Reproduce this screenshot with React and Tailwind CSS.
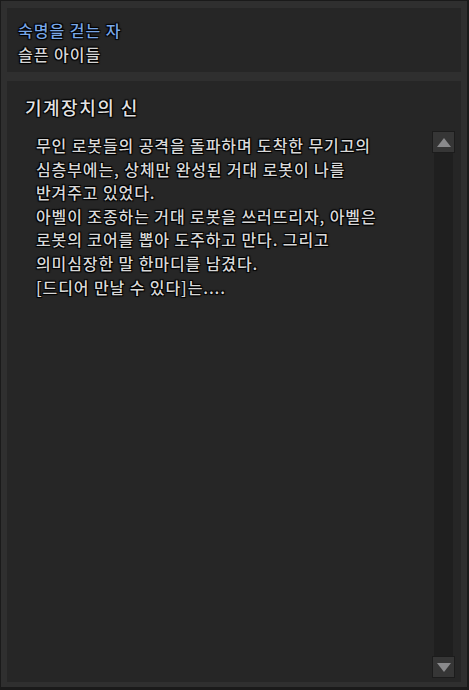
import React from 'react';

const lines = [
  '무인 로봇들의 공격을 돌파하며 도착한 무기고의',
  '심층부에는, 상체만 완성된 거대 로봇이 나를',
  '반겨주고 있었다.',
  '아벨이 조종하는 거대 로봇을 쓰러뜨리자, 아벨은',
  '로봇의 코어를 뽑아 도주하고 만다. 그리고',
  '의미심장한 말 한마디를 남겼다.',
  '[드디어 만날 수 있다]는....',
];

const shadow = '[text-shadow:1px_1px_1px_#000,-1px_-1px_1px_#000,1px_-1px_1px_#000,-1px_1px_1px_#000]';

const App = () => {
  return (
    <div className="h-[690px] w-[469px] bg-[#1a1a1a] pt-px pl-px pr-[2px] pb-[3px] font-['Noto_Sans_CJK_KR',sans-serif]">
      <div className="flex h-full flex-col gap-[9px] bg-[#2f2f2f] pt-[7px] pl-[6px] pr-[6px] pb-[5px]">
        {/* header */}
        <div className="h-[64px] shrink-0 bg-[#262626] pl-[11px] pt-[10px]">
          <div className={`text-[16px] font-medium tracking-[1px] leading-[24px] text-[#78a6e6] ${shadow}`}>숙명을 걷는 자</div>
          <div className={`text-[16px] font-medium tracking-[1px] leading-[24px] text-[#d6d6d6] ${shadow}`}>슬픈 아이들</div>
        </div>

        {/* quest body */}
        <div className="flex min-h-0 flex-1 flex-col bg-[#262626] pl-[18px] pr-[6px] pt-[13px] pb-[4px]">
          <div className={`text-[18px] font-medium tracking-[1.5px] leading-[26px] text-[#e2e2e2] ${shadow}`}>기계장치의 신</div>
          <div className="mt-[11px] flex min-h-0 flex-1">
            <div className="mt-[3px] flex-1 pl-[11px]">
              {lines.map((l, i) => (
                <div key={i} className={`text-[16px] font-medium tracking-[0.9px] leading-[23.6px] text-[#d8d8d8] ${shadow}`}>{l}</div>
              ))}
            </div>
            <div className="flex w-[23px] flex-col items-center">
              <div className="flex h-[22px] w-[23px] items-center justify-center border border-[#1c1c1c] bg-[#363636]">
                <svg width="14" height="9" viewBox="0 0 14 9"><path d="M7 0 L14 9 L0 9 Z" fill="#8a8a8c" /></svg>
              </div>
              <div className="w-[19px] flex-1 bg-[#1f1f1f]" />
              <div className="flex h-[22px] w-[23px] items-center justify-center border border-[#1c1c1c] bg-[#363636]">
                <svg width="14" height="9" viewBox="0 0 14 9"><path d="M0 0 L14 0 L7 9 Z" fill="#8a8a8c" /></svg>
              </div>
            </div>
          </div>
        </div>
      </div>
    </div>
  );
};

export default App;
